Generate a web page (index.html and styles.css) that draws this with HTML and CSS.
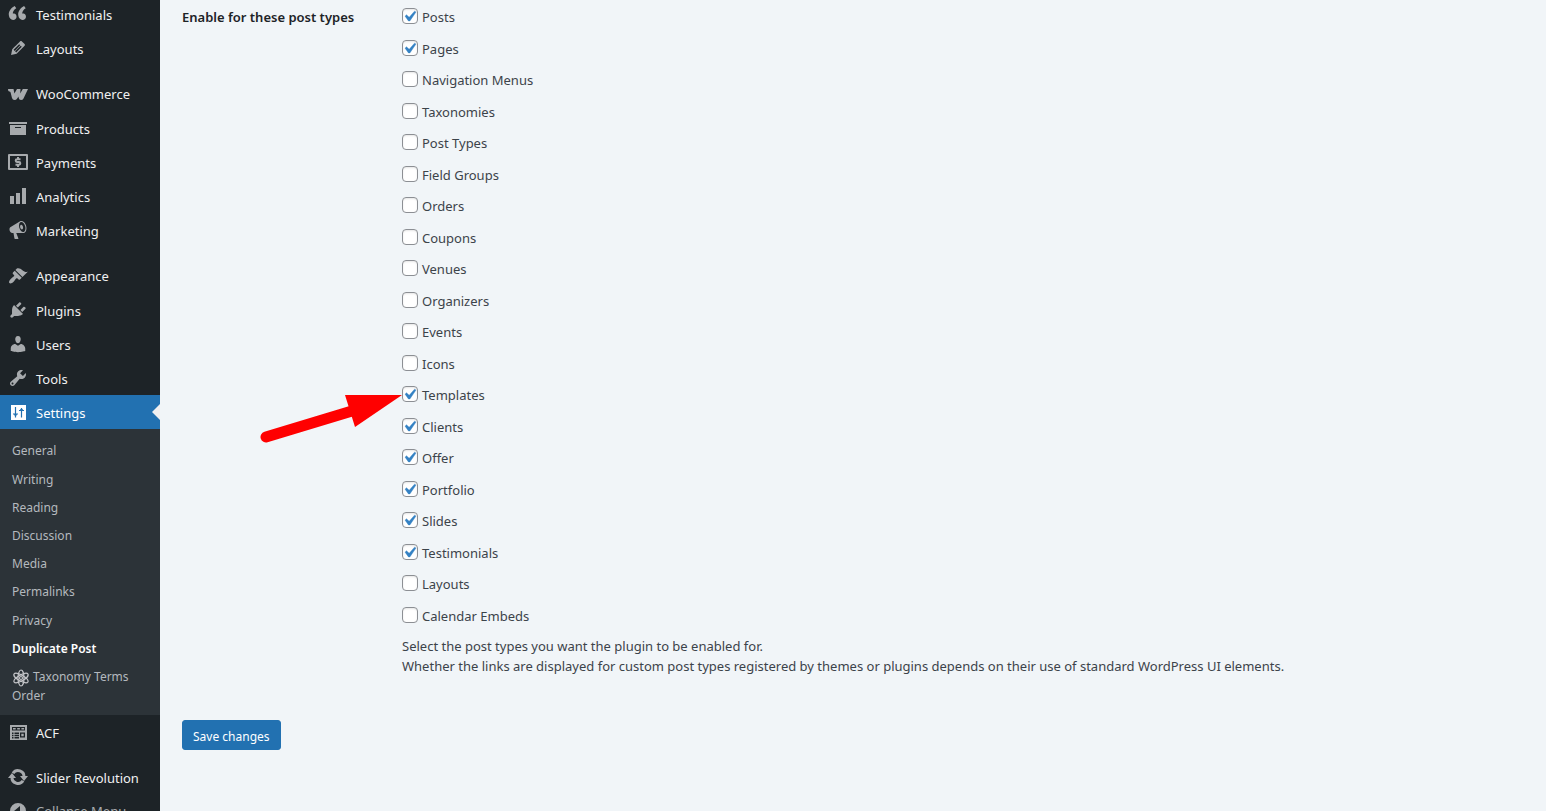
FILE: index.html
```html
<!DOCTYPE html>
<html lang="en">
<head>
    <meta charset="UTF-8">
    <meta name="viewport" content="width=device-width, initial-scale=1.0">
    <title>Duplicate Post Options</title>
    <link rel="stylesheet" href="styles.css">
</head>
<body>
    <div class="wrap">
        <nav class="sidebar" aria-label="Main menu">
            <ul class="menu">
                <li><a href="#"><svg class="icon" viewBox="0 0 20 20"><path d="M8.54 12.74c0-.87-.24-1.61-.72-2.22-.73-.92-2.14-1.03-2.96-.85-.34-1.93 1.3-4.39 3.42-5.45L6.65 1.94C3.45 3.46.31 6.96.85 11.37 1.19 14.16 2.8 16 5.08 16c1 0 1.83-.29 2.48-.88.66-.59.98-1.38.98-2.38zm9.43 0c0-.87-.24-1.61-.72-2.22-.73-.92-2.14-1.03-2.96-.85-.34-1.93 1.3-4.39 3.42-5.45l-1.63-2.28c-3.2 1.52-6.34 5.02-5.8 9.43.34 2.79 1.95 4.63 4.23 4.63 1 0 1.83-.29 2.48-.88.66-.59.98-1.38.98-2.38z"/></svg>Testimonials</a></li>
                <li><a href="#"><svg class="icon" viewBox="0 0 20 20"><path d="M13.89 3.39l2.71 2.72c.46.46.42 1.24.03 1.64l-8.01 8.02-5.56 1.16 1.16-5.58s7.6-7.63 7.99-8.03c.39-.39 1.22-.39 1.68.07zm-2.73 2.79l-5.59 5.61 1.11 1.11 5.54-5.65zm-2.97 8.23l5.58-5.6-1.07-1.08-5.59 5.6z"/></svg>Layouts</a></li>
                <li class="separator"></li>
                <li><a href="#"><svg class="icon" viewBox="0 0 20 20"><path d="M0 5h5.500l.9 4.500L9 5h3.500l-.3 4.500L14.800 5H20l-4.500 9.500q-.8 1.500-2.500 1.500-2 0-2.300-2l-.2-1.500-1.300 2Q8.200 16 6.500 16 4.500 16 4 14L2.600 8.500Q2.300 7.500 1.300 7.500 0 7.500 0 5z"/></svg>WooCommerce</a></li>
                <li><a href="#"><svg class="icon" viewBox="0 0 20 20"><path d="M19 4v2H1V4h18zM2 7h16v10H2V7zm11 3V9H7v1h6z"/></svg>Products</a></li>
                <li><a href="#"><svg class="icon" viewBox="0 0 20 20"><path class="line frame" d="M1 3h18v14H1z"/><path class="line" d="M12.500 7.300H9q-1.300 0-1.300 1.300T9 10h2q1.300 0 1.300 1.300T11 12.700H7.500M10 5v2.500M10 12.500V15"/></svg>Payments</a></li>
                <li><a href="#"><svg class="icon" viewBox="0 0 20 20"><path d="M18 18V2h-4v16h4zm-6 0V7H8v11h4zm-6 0v-8H2v8h4z"/></svg>Analytics</a></li>
                <li><a href="#"><svg class="icon" viewBox="0 0 20 20"><path d="M18.150 5.940c.46 1.620.38 3.220-.02 4.480-.42 1.280-1.260 2.180-2.300 2.480-.16.06-.26.06-.4.06-.06.02-.12.02-.18.02-.06.02-.14.02-.22.02h-6.800l2.220 5.500c.02.14-.06.26-.14.34-.08.1-.24.16-.34.16H6.950c-.1 0-.26-.06-.34-.16-.08-.08-.16-.2-.14-.34l-1-5.500H4.250l-.02-.02c-.5.06-1.080-.18-1.540-.62s-.88-1.080-1.060-1.880c-.24-.8-.2-1.560-.02-2.200.18-.62.58-1.080 1.060-1.300l.02-.02 9-5.400c.1-.06.18-.1.24-.16.06-.04.14-.08.24-.12.16-.08.28-.12.5-.18 1.040-.3 2.240.1 3.220.98s1.840 2.240 2.260 3.860zm-2.580 5.980h-.02c.4-.1.74-.34 1.040-.7.58-.7.86-1.760.86-3.040 0-.64-.1-1.300-.28-1.980-.34-1.360-1.020-2.500-1.780-3.240s-1.680-1.100-2.460-.88c-.82.22-1.400.96-1.700 2-.32 1.040-.28 2.360.06 3.720.38 1.360 1 2.500 1.800 3.240.78.74 1.620 1.100 2.480.88zm-2.540-7.080c.22-.04.42-.02.62.04.38.16.76.48 1.020 1s.42 1.200.42 1.780c0 .3-.04.56-.12.8-.18.48-.44.84-.86.94-.34.1-.8-.06-1.140-.4s-.64-.86-.78-1.500c-.18-.62-.12-1.240.02-1.720s.48-.84.82-.94z"/></svg>Marketing</a></li>
                <li class="separator"></li>
                <li><a href="#"><svg class="icon" viewBox="0 0 20 20"><path d="M14.480 11.060L7.410 3.990l1.500-1.500c.5-.56 2.300-.47 3.510.32 1.210.8 1.430 1.280 2.910 2.100 1.180.64 2.450 1.260 4.450.85zm-.71.71L6.700 4.700 4.930 6.470c-.39.39-.39 1.020 0 1.410l1.060 1.060c.39.39.39 1.030 0 1.420-.6.6-1.430 1.110-2.210 1.690-.35.26-.7.53-1.010.84C1.430 14.230.4 16.080 1.400 17.070c.99 1 2.840-.03 4.180-1.360.31-.31.58-.66.85-1.020.57-.78 1.080-1.610 1.690-2.210.39-.39 1.020-.39 1.410 0l1.060 1.060c.39.39 1.020.39 1.410 0z"/></svg>Appearance</a></li>
                <li><a href="#"><svg class="icon" viewBox="0 0 20 20"><path d="M13.110 4.360L9.870 7.600 8 5.730l3.240-3.240c.35-.34 1.050-.2 1.560.32.52.51.66 1.210.31 1.550zm-8 1.770l.91-1.120 9.010 9.010-1.190.84c-.71.71-2.630 1.160-3.820 1.160H6.140L4.900 17.260c-.59.59-1.540.59-2.120 0-.59-.58-.59-1.530 0-2.120l1.240-1.240v-3.880c0-1.130.4-3.190 1.090-3.890zm7.260 3.970l3.240-3.240c.34-.35 1.040-.21 1.550.31.52.51.66 1.210.31 1.550l-3.240 3.250z"/></svg>Plugins</a></li>
                <li><a href="#"><svg class="icon" viewBox="0 0 20 20"><path d="M10 9.250c-2.270 0-2.730-3.440-2.730-3.440C7 4.020 7.820 2 9.970 2c2.160 0 2.980 2.020 2.710 3.810 0 0-.41 3.440-2.680 3.440zm0 2.570L12.720 10c2.390 0 4.520 2.330 4.520 4.530v2.490s-3.650 1.130-7.240 1.130c-3.650 0-7.240-1.130-7.240-1.130v-2.490c0-2.250 1.940-4.480 4.470-4.480z"/></svg>Users</a></li>
                <li><a href="#"><svg class="icon" viewBox="0 0 20 20"><path d="M16.680 9.770c-1.340 1.340-3.300 1.670-4.950.99l-5.410 6.520c-.99.99-2.590.99-3.580 0s-.99-2.590 0-3.570l6.520-5.420c-.68-1.650-.35-3.610.99-4.950 1.280-1.280 3.120-1.620 4.720-1.060l-2.890 2.890 2.820 2.820 2.860-2.870c.53 1.580.18 3.390-1.080 4.650zM3.810 16.210c.4.39 1.040.39 1.430 0 .4-.4.4-1.040 0-1.430-.39-.4-1.030-.4-1.430 0-.39.39-.39 1.030 0 1.430z"/></svg>Tools</a></li>
                <li>
                    <a href="#" class="current"><svg class="icon" viewBox="0 0 20 20"><path d="M3 3h15v15H3z"/><path class="cut" d="M7.500 5v10.500M5 12h5M13.500 6v9.500M11 8.500h5M6.200 13h2.600M12.200 7.500h2.600"/></svg>Settings</a>
                    <ul class="submenu">
                        <li><a href="#">General</a></li>
                        <li><a href="#">Writing</a></li>
                        <li><a href="#">Reading</a></li>
                        <li><a href="#">Discussion</a></li>
                        <li><a href="#">Media</a></li>
                        <li><a href="#">Permalinks</a></li>
                        <li><a href="#">Privacy</a></li>
                        <li><a href="#" class="active">Duplicate Post</a></li>
                        <li><a href="#"><svg class="atom" viewBox="0 0 18 18"><ellipse cx="9" cy="9" rx="3" ry="8"/><ellipse cx="9" cy="9" rx="3" ry="8" transform="rotate(60 9 9)"/><ellipse cx="9" cy="9" rx="3" ry="8" transform="rotate(120 9 9)"/><circle cx="9" cy="9" r="1.500"/></svg> Taxonomy Terms Order</a></li>
                    </ul>
                </li>
                <li><a href="#"><svg class="icon" viewBox="0 0 20 20"><path fill-rule="evenodd" d="M2 3h17v15H2zM4 5v3.500h13V5zM4 10.500V12h1.500v-1.500zM6.500 10.500V12H11v-1.500zM4 12.700v1.500h1.500v-1.500zM6.500 12.700v1.500H11v-1.500zM4 15v1.500h1.500V15zM6.500 15v1.500H11V15zM12 10.500v5h5v-5z"/><path d="M5 6h2.700v1.500H5zM9.200 6h2.700v1.500H9.200zM13.400 6h2.700v1.500h-2.700zM13.300 11.800h2.400v2.400h-2.400z"/></svg>ACF</a></li>
                <li class="separator"></li>
                <li><a href="#"><svg class="icon" viewBox="0 0 20 20"><path class="line ring" d="M5 6.300A6 6 0 0 1 16 10M15 13.700A6 6 0 0 1 4 10"/><path d="M12 9h8l-4 5zM0 11h8L4 6z"/></svg>Slider Revolution</a></li>
                <li><button type="button" class="collapse"><svg class="icon" viewBox="0 0 20 20"><path fill-rule="evenodd" d="M10 2a8 8 0 1 1 0 16 8 8 0 0 1 0-16zM12 5l-6 5 6 5z"/></svg>Collapse Menu</button></li>
            </ul>
        </nav>

        <main class="content">
            <form>
                <div class="form-row">
                    <h2 id="post-types">Enable for these post types</h2>
                    <div class="field" role="group" aria-labelledby="post-types">
                        <ul class="options">
                            <li><label><input type="checkbox" checked> Posts</label></li>
                            <li><label><input type="checkbox" checked> Pages</label></li>
                            <li><label><input type="checkbox"> Navigation Menus</label></li>
                            <li><label><input type="checkbox"> Taxonomies</label></li>
                            <li><label><input type="checkbox"> Post Types</label></li>
                            <li><label><input type="checkbox"> Field Groups</label></li>
                            <li><label><input type="checkbox"> Orders</label></li>
                            <li><label><input type="checkbox"> Coupons</label></li>
                            <li><label><input type="checkbox"> Venues</label></li>
                            <li><label><input type="checkbox"> Organizers</label></li>
                            <li><label><input type="checkbox"> Events</label></li>
                            <li><label><input type="checkbox"> Icons</label></li>
                            <li class="pointed">
                                <label><input type="checkbox" checked> Templates</label>
                                <svg class="arrow" viewBox="0 0 142 48"><path class="shaft" d="M6 42L92 16"/><path d="M85 0H142L95 32z"/></svg>
                            </li>
                            <li><label><input type="checkbox" checked> Clients</label></li>
                            <li><label><input type="checkbox" checked> Offer</label></li>
                            <li><label><input type="checkbox" checked> Portfolio</label></li>
                            <li><label><input type="checkbox" checked> Slides</label></li>
                            <li><label><input type="checkbox" checked> Testimonials</label></li>
                            <li><label><input type="checkbox"> Layouts</label></li>
                            <li><label><input type="checkbox"> Calendar Embeds</label></li>
                        </ul>
                        <p class="description">Select the post types you want the plugin to be enabled for.<br>Whether the links are displayed for custom post types registered by themes or plugins depends on their use of standard WordPress UI elements.</p>
                    </div>
                </div>
                <button type="submit" class="button-primary">Save changes</button>
            </form>
        </main>
    </div>
</body>
</html>
```
FILE: styles.css
```css
body {
    margin: 0;
    font-family: "Noto Sans", "Open Sans", sans-serif;
    font-size: 13px;
    line-height: 1.5;
    color: #3c434a;
    background-color: #f1f5f8;
}
ul {
    list-style: none;
    margin: 0;
    padding: 0;
}
.wrap {
    display: flex;
    height: 100vh;
    overflow: hidden;
}

/* Sidebar */
.sidebar {
    flex: 0 0 160px;
    background-color: #1d2327;
}
.menu {
    margin-top: -3px;
    line-height: 1.4em;
}
.menu a {
    display: flex;
    align-items: center;
    padding: 9px 0 7px;
    color: #f0f0f1;
    text-decoration: none;
}
.icon {
    flex: none;
    width: 20px;
    height: 20px;
    margin: -3px 8px -1px;
    fill: #a7aaad;
}
.icon .line {
    fill: none;
    stroke: #a7aaad;
    stroke-width: 2;
}
.icon .frame {
    stroke-linejoin: round;
}
.icon .ring {
    stroke-width: 3;
}
.icon .cut {
    fill: none;
    stroke: #2271b1;
    stroke-width: 1.2;
}
.separator {
    height: 11px;
}
.menu .current {
    position: relative;
    color: #fff;
    background-color: #2271b1;
}
.current .icon {
    fill: #fff;
}
.current::after {
    content: "";
    position: absolute;
    right: 0;
    top: 9px;
    border: 8px solid transparent;
    border-left-width: 0;
    border-right-color: #f0f0f1;
}
.submenu {
    padding: 7px 0 6px;
    background-color: #2c3338;
    font-size: 12px;
}
.submenu a {
    display: block;
    padding: 6px 12px 4px;
    color: #b4b9be;
}
.submenu .active {
    color: #fff;
    font-weight: 600;
}
.atom {
    width: 18px;
    height: 18px;
    vertical-align: middle;
    fill: none;
    stroke: #c3c4c7;
    stroke-width: 1.2;
}
.collapse {
    display: flex;
    align-items: center;
    width: 100%;
    padding: 8px 0;
    border: 0;
    background: none;
    color: #a7aaad;
    font: inherit;
    cursor: pointer;
}

/* Settings form */
.content {
    flex: 1;
    padding: 8px 20px 0 22px;
}
.form-row {
    display: grid;
    grid-template-columns: 220px 1fr;
    margin-bottom: 44px;
}
h2 {
    margin: 0;
    font-size: 13px;
    font-weight: 600;
    color: #1d2327;
}
.options {
    display: flex;
    flex-direction: column;
    gap: 12px;
}
.options label {
    display: flex;
    gap: 4px;
}
.options input {
    appearance: none;
    width: 16px;
    height: 16px;
    margin: 0;
    border: 1px solid #8c8f94;
    border-radius: 4px;
    background-color: #fff;
    box-shadow: inset 0 1px 2px rgba(0, 0, 0, 0.1);
}
.options input:checked {
    background-image: url("data:image/svg+xml,%3Csvg xmlns='http://www.w3.org/2000/svg' viewBox='0 0 20 20'%3E%3Cpath d='M14.830 4.890l1.340.94-5.810 8.380H9.020L5.780 9.670l1.340-1.250 2.570 2.400z' fill='%233582c4' stroke='%233582c4' stroke-width='.4'/%3E%3C/svg%3E");
    background-position: -4px -3px;
    background-size: 21px 21px;
    background-repeat: no-repeat;
}
.pointed {
    position: relative;
}
.arrow {
    position: absolute;
    right: 100%;
    top: 9px;
    width: 142px;
    height: 48px;
    fill: #f00;
}
.arrow .shaft {
    stroke: #f00;
    stroke-width: 11;
    stroke-linecap: round;
}
.description {
    margin: 11px 0 0;
}
.button-primary {
    min-height: 30px;
    padding: 2px 10px 0;
    border: 1px solid #2271b1;
    border-radius: 3px;
    background-color: #2271b1;
    color: #fff;
    font-family: inherit;
    font-size: 12px;
    cursor: pointer;
}
.button-primary:hover {
    background-color: #135e96;
}
```
